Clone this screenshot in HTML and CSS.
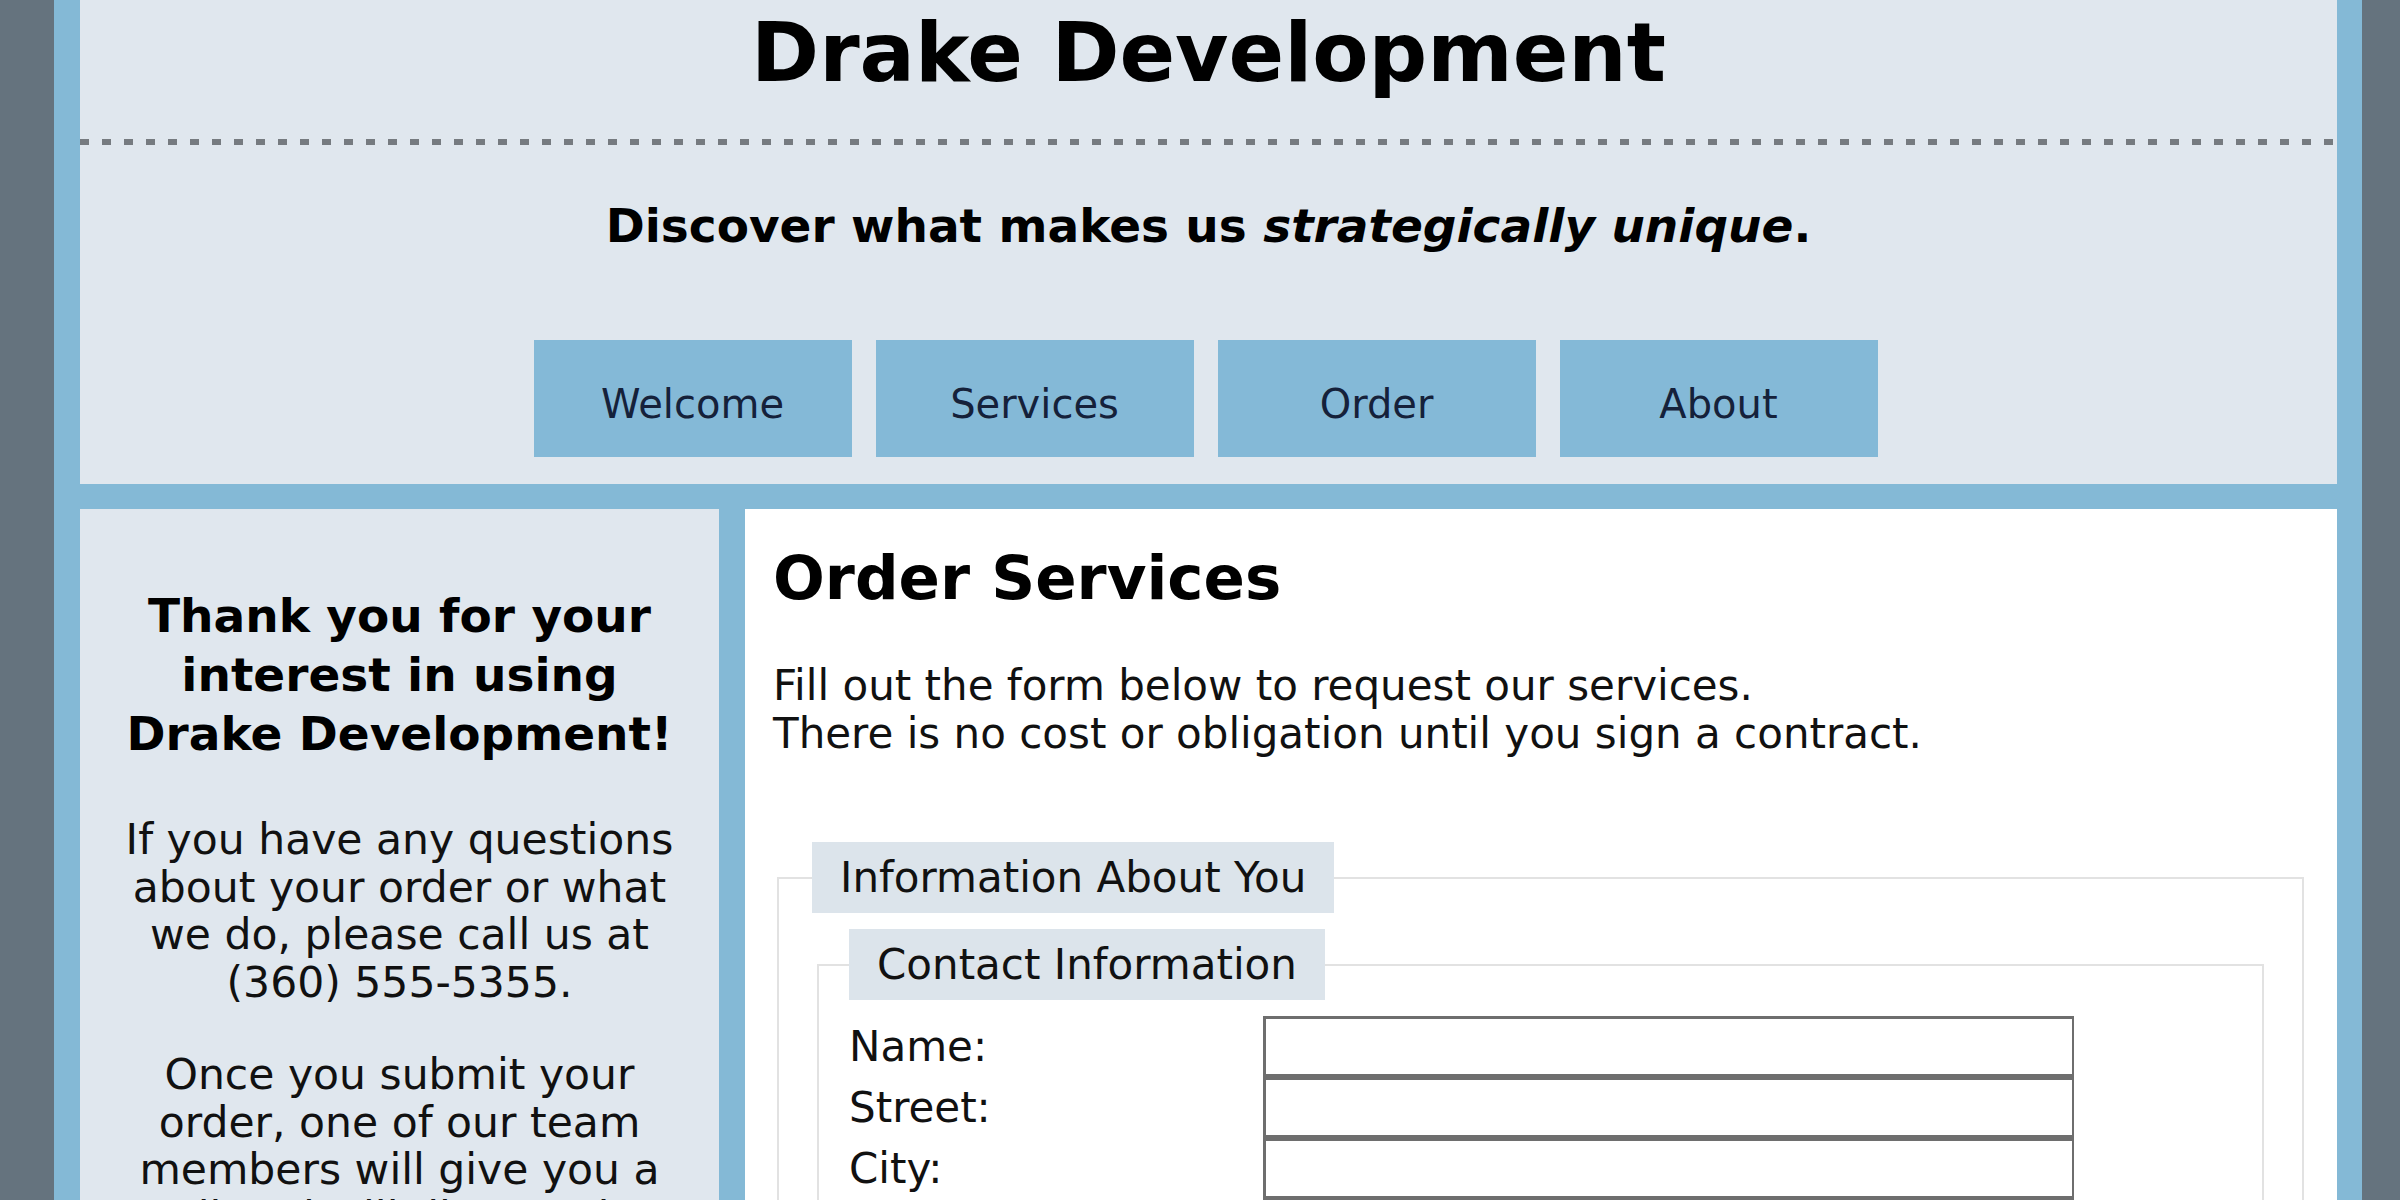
FILE: index.html
```html
<!DOCTYPE html>
<html lang="en">
<head>
<meta charset="utf-8">
<title>Drake Development - Order Services</title>
<link rel="stylesheet" href="styles.css">
</head>
<body>
<div class="page">
  <header class="masthead">
    <h1 class="site-title">Drake Development</h1>
    <div class="rule"></div>
    <p class="tagline">Discover what makes us <em>strategically unique</em>.</p>
    <nav class="nav">
      <a class="nav-link" href="#">Welcome</a>
      <a class="nav-link" href="#">Services</a>
      <a class="nav-link" href="#">Order</a>
      <a class="nav-link" href="#">About</a>
    </nav>
  </header>
  <div class="columns">
    <aside class="sidebar">
      <h3 class="side-title">Thank you for your interest in using Drake Development!</h3>
      <p class="side-text">If you have any questions about your order or what we do, please call us at (360)&nbsp;555-5355.</p>
      <p class="side-text">Once you submit your order, one of our team members will give you a call and will discuss the details of your order.</p>
    </aside>
    <main class="content">
      <h2 class="content-title">Order Services</h2>
      <p class="intro">Fill out the form below to request our services.<br>There is no cost or obligation until you sign a contract.</p>
      <form class="order-form">
        <fieldset class="group">
          <legend class="group-legend">Information About You</legend>
          <fieldset class="subgroup">
            <legend class="sub-legend">Contact Information</legend>
            <div class="fields">
              <label class="field-label" for="name">Name:</label>
              <input class="field-input" id="name" type="text">
              <label class="field-label" for="street">Street:</label>
              <input class="field-input" id="street" type="text">
              <label class="field-label" for="city">City:</label>
              <input class="field-input" id="city" type="text">
              <label class="field-label" for="state">State:</label>
              <input class="field-input" id="state" type="text">
            </div>
          </fieldset>
        </fieldset>
      </form>
    </main>
  </div>
</div>
</body>
</html>
```
FILE: styles.css
```css
html, body {
  margin: 0;
  padding: 0;
}

body {
  background: #65737e;
  font-family: "DejaVu Sans", Verdana, sans-serif;
  color: #111;
}

.page {
  margin-left: 54px;
  width: 2308px;
  box-sizing: border-box;
  background: #84b9d6;
  padding: 0 25px 25px 26px;
}

.masthead {
  background: #e0e7ee;
  text-align: center;
  padding: 5px 0 27px;
}

.site-title {
  margin: 0;
  font-size: 82px;
  font-weight: bold;
  line-height: 95px;
  color: #000;
}

.rule {
  margin-top: 39px;
  height: 6px;
  background-image: repeating-linear-gradient(90deg, #767b80 0 9px, transparent 9px 22px);
}

.tagline {
  margin: 54px 0 0;
  font-size: 47px;
  font-weight: bold;
  line-height: 54px;
  color: #000;
}

.nav {
  margin-top: 87px;
  display: flex;
  justify-content: center;
  gap: 24px;
  padding-right: 6px;
}

.nav-link {
  width: 318px;
  height: 117px;
  box-sizing: border-box;
  padding-top: 10px;
  display: flex;
  align-items: center;
  justify-content: center;
  background: #84b9d7;
  color: #15213a;
  text-decoration: none;
  font-size: 40px;
}

.columns {
  margin-top: 25px;
  display: flex;
  gap: 26px;
  align-items: flex-start;
}

.sidebar {
  width: 639px;
  flex: none;
  box-sizing: border-box;
  background: #e0e7ee;
  padding: 77px 30px 40px;
  text-align: center;
  min-height: 700px;
}

.side-title {
  margin: 0 0 53px;
  font-size: 47px;
  line-height: 59px;
  font-weight: bold;
  color: #000;
}

.side-text {
  margin: 0 0 45px;
  font-size: 42.5px;
  line-height: 47.5px;
}

.content {
  flex: 1;
  background: #fff;
  padding: 33px 33px 40px 28px;
  min-height: 700px;
}

.content-title {
  margin: 0;
  font-size: 61px;
  line-height: 71px;
  font-weight: bold;
  color: #000;
}

.intro {
  margin: 49px 0 0;
  font-size: 42px;
  line-height: 47.5px;
}

.order-form {
  margin-top: 85px;
}

.group {
  margin: 0 0 0 4px;
  border: 2px solid #e2e2e2;
  padding: 16px 38px 30px 33px;
}

.group-legend,
.sub-legend {
  background: #dce4eb;
  font-size: 42px;
  line-height: 47px;
  padding: 12px 28px;
}

.subgroup {
  margin: 0 0 0 5px;
  border: 2px solid #e2e2e2;
  padding: 16px 28px 30px 30px;
}

.fields {
  display: grid;
  grid-template-columns: 414px 811px;
  align-items: center;
}

.field-label {
  font-size: 42px;
  line-height: 47px;
}

.field-input {
  box-sizing: border-box;
  width: 811px;
  height: 61px;
  margin: 0;
  background: #fff;
  border-style: solid;
  border-color: #6e6e6e;
  border-width: 3px 2px 3px 3px;
  font-size: 36px;
}
```
